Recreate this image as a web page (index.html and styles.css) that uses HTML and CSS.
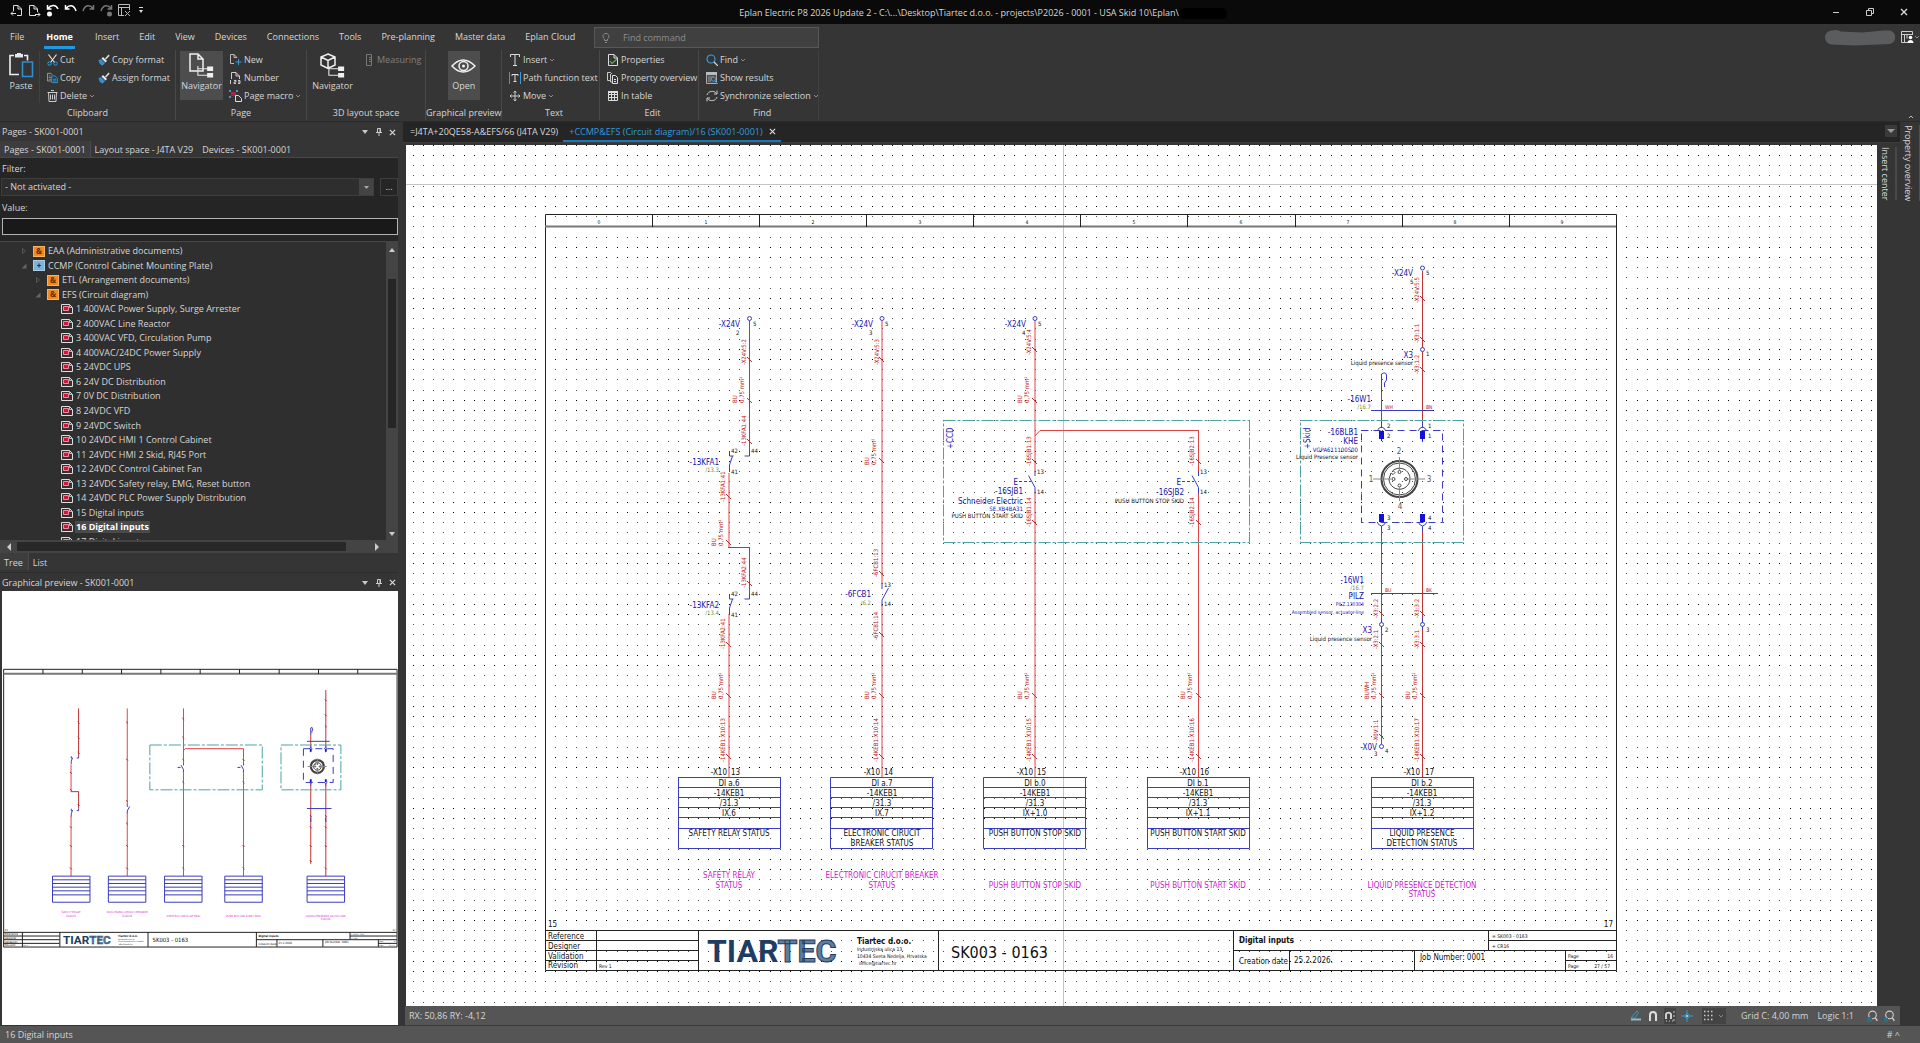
FILE: index.html
```html
<!DOCTYPE html>
<html lang="en">
<head>
<meta charset="utf-8">
<title>Eplan Electric P8 2026 Update 2</title>
<link rel="stylesheet" href="styles.css">
</head>
<body>
<svg class="defs" aria-hidden="true">
  <defs>
    <symbol id="i-chev" viewBox="0 0 6 6"><path d="M1 2l2 2 2-2" fill="none" stroke="#8a8a8a"/></symbol>
    <symbol id="i-tri" viewBox="0 0 8 8"><path d="M1 2h6L4 6z" fill="#c8c8c8"/></symbol>
    <symbol id="i-pin" viewBox="0 0 8 8"><path d="M2.5.5h3v4h-3zM1 4.5h6M4 4.5V8M5 1v3" fill="none" stroke="#ccc"/></symbol>
    <symbol id="i-x" viewBox="0 0 8 8"><path d="M1 1l6 6M7 1L1 7" fill="none" stroke="#ddd" stroke-width="1.3"/></symbol>
    <symbol id="i-page" viewBox="0 0 12 10"><path d="M.5.5h8l3 3v6H.5z" fill="#3a3032" stroke="#ddd"/><path d="M8.500.5v3h3" fill="none" stroke="#8fd0b8"/><path d="M2.500 2.500h5v4h-5z" fill="#d4143c" stroke="#f28aa0"/></symbol>
    <symbol id="i-amp" viewBox="0 0 12 11"><path d="M0 0h12v11H0z" fill="#f28a1e"/><path d="M.5.5h11v10H.5z" fill="none" stroke="#ffd9a8" stroke-dasharray="1 1"/><text x="6" y="8" text-anchor="middle" font-size="8" font-weight="700" fill="#5c3000">&amp;</text></symbol>
    <symbol id="i-plus" viewBox="0 0 12 11"><path d="M0 0h12v11H0z" fill="#7fb2d6"/><path d="M.5.5h11v10H.5z" fill="none" stroke="#d5ecfa" stroke-dasharray="1 1"/><path d="M6 3.500v4M4 5.500h4" stroke="#0d3f70" stroke-width="1.200"/></symbol>
    <symbol id="i-shut" viewBox="0 0 6 6"><path d="M1.500.5l3 2.500-3 2.500z" fill="none" stroke="#555"/></symbol>
    <symbol id="i-open" viewBox="0 0 6 6"><path d="M5.500.5v5h-5z" fill="#666"/></symbol>
    <symbol id="i-brush" viewBox="0 0 12 12"><path d="M7 4.500L10.500.5l1.200 1.200L8 5.500z" fill="#ddd"/><path d="M5 3l4 4-1.500 1.500-4-4z" fill="#e8e8e8"/><path d="M3 5l4 4-2.500 2.500C2.500 11 1 9 .5 6.500z" fill="#3a9bd8"/><path d="M1.500 7l3 3M3 6l3 3" stroke="#1c5f93" stroke-width=".6"/></symbol>
    <symbol id="i-mag" viewBox="0 0 10 11"><circle cx="5" cy="4.500" r="3.500" fill="none" stroke="#ccc"/><path d="M7.500 7l2 3" stroke="#ccc" stroke-width="1.300"/></symbol>
    <symbol id="i-navtree" viewBox="0 0 15 11"><path d="M.5 0v8.500h9M.5 2.500h9" fill="none" stroke="#e6e6e6"/><path d="M9 .5h5.500v4H9zM9 6.500h5.500v4H9z" fill="#f0f0f0"/></symbol>

    <g id="terminal-box">
      <path class="ln blue" d="M.5.5h102v71H.5zM.5 10.500h102M.5 20.500h102M.5 30.500h102M.5 40.500h102M.5 51.500h102"/>
    </g>

    <g id="sheet">
      <path class="ln ink" d="M545.500 214.500H1616.500V970.500H545.500z"/>
      <path class="ln gray" d="M545 226.500H1616"/>
      <path class="ln ink" d="M652.500 214v13M759.500 214v13M866.500 214v13M973.500 214v13M1080.500 214v13M1187.500 214v13M1295.500 214v13M1402.500 214v13M1509.500 214v13"/>
      <path class="ln ink" d="M545 930.500H1616M545 940.500H698M545 950.500H698M545 960.500H698M596.500 930v40M698.500 930v40M938.500 930v40M1233.500 930v40M1233 950.500H1616M1488.500 930v20M1488 940.500H1616M1289.500 950v20M1414.500 950v20M1565.500 950v20M1565 960.500H1616"/>

      <path class="ln wire-dark" d="M749.500 321V452M749.500 547V594M728 547.500H750M1422.500 271V425M1422.500 528V777M1381.500 390V425M1381.500 528V744"/>
      <path class="ln wire" d="M729 473V547M729 614V777M882 321V584M882 605V777M1035 321V472M1035 492V777M1035 436l5-5.500H1198.500V472M1198.500 492V777"/>
      <path class="ln tick" d="M747 357l5 5M747 398l5 5M747 439l5 5M726 494l5 5M726 540l5 5M747 581l5 5M726 642l5 5M726 693l5 5M726 754l5 5M879 357l5 5M879 458l5 5M879 571l5 5M879 632l5 5M879 693l5 5M879 754l5 5M1032 347l5 5M1032 398l5 5M1032 459l5 5M1032 520l5 5M1032 693l5 5M1032 754l5 5M1196 459l5 5M1196 520l5 5M1196 693l5 5M1196 754l5 5M1420 296l5 5M1420 337l5 5M1420 367l5 5M1379 611l5 5M1420 611l5 5M1379 642l5 5M1420 642l5 5M1379 693l5 5M1420 693l5 5M1379 734l5 5M1420 754l5 5"/>
      <g class="ln blue">
        <path d="M749.500 451v5h-5M729.500 451v5h4M732.500 456l-3 9v7M749.500 594v5h-5M729.500 594v5h4M732.500 599l-3 9v7M882 583v6M888.500 588L882 600v6M1035 471v5M1028.500 475.500l6.500 12v6M1198.500 471v5M1192 475.500l6.500 12v6"/>
        <path stroke-dasharray="3 2" d="M1019 481.500h12M1182 481.500h12"/>
        <path d="M1371 410.500h62M1371 593.500h67M1381.500 392V374q5-3 5 2v4l-2 3v4M1377 431q4.500-8 9 0M1418 431q4.500-8 9 0M1377 522q4.500 8 9 0M1418 522q4.500 8 9 0M1381.500 422v6M1422.500 422v6M1381.500 526v5M1422.500 526v5M1381.500 618v12M1422.500 618v12"/>
      </g>
      <path class="solid-blue" d="M1379 431h5v8h-5zM1381 439h1v2h-1zM1420 431h5v8h-5zM1422 439h1v2h-1zM1379 514h5v8h-5zM1420 514h5v8h-5z"/>
      <path class="ln teal" stroke-dasharray="12 2 3 2" d="M943.500 420.500h306v122h-306zM1300.500 420.500h163v122h-163z"/>
      <path class="ln blue" stroke-dasharray="7 5" d="M1361.500 430.500h81v92h-81z"/>
      <g class="ln connector">
        <circle class="ring" cx="1399.500" cy="479" r="18"/><circle cx="1399.500" cy="479" r="16"/>
        <path d="M1391 473l-2 6a10.500 10.500 0 1 0 4-8.500l2 2-2 2z"/>
        <circle cx="1393.500" cy="479" r="1.500"/><circle cx="1406" cy="479" r="1.500"/><circle cx="1399.500" cy="472" r="1.500"/><circle cx="1399.500" cy="485.500" r="1.500"/>
        <path class="thin" d="M1373 479h18M1408 479h17M1399.500 457v13M1399.500 487v14"/>
      </g>
      <use href="#terminal-box" x="678" y="777"/>
      <use href="#terminal-box" x="830" y="777"/>
      <use href="#terminal-box" x="983" y="777"/>
      <use href="#terminal-box" x="1147" y="777"/>
      <use href="#terminal-box" x="1371" y="777"/>

      <g class="t8 magenta mid">
        <text x="729" y="878">SAFETY RELAY</text><text x="729" y="888">STATUS</text>
        <text x="882" y="878">ELECTRONIC CIRUCIT BREAKER</text><text x="882" y="888">STATUS</text>
        <text x="1035" y="888">PUSH BUTTON STOP SKID</text>
        <text x="1198" y="888">PUSH BUTTON START SKID</text>
        <text x="1422" y="888">LIQUID PRESENCE DETECTION</text><text x="1422" y="897">STATUS</text>
      </g>
      <g class="t8">
        <text x="548" y="927">15</text><text x="1613" y="927" class="end">17</text>
        <text x="548" y="939">Reference</text><text x="548" y="949">Designer</text><text x="548" y="959">Validation</text><text x="548" y="968">Revision</text>
        <text x="857" y="944" class="bold">Tiartec d.o.o.</text>
        <text x="1239" y="943" class="bold">Digital inputs</text>
        <text x="1239" y="964">Creation date</text><text x="1294" y="963">25.2.2026.</text><text x="1420" y="960">Job Number: 0001</text>
      </g>
      <text class="t16" x="951" y="958">SK003 - 0163</text>
      <g class="t5">
        <text x="599" y="968">Rev 1</text>
        <text x="857" y="951">Industrijska ulica 13,</text><text x="857" y="958">10434 Sveta Nedelja, Hrvatska</text><text x="859" y="965">office@tiartec.hr</text>
        <text x="1492" y="938">=  SK003 - 0163</text><text x="1492" y="948">+  CR16</text>
        <text x="1568" y="958">Page</text><text x="1613" y="958" class="end">16</text><text x="1568" y="968">Page</text><text x="1610" y="968" class="end">27 / 57</text>
      </g>
      <text class="logo" x="707" y="962">TIAR<tspan class="logo-open">TEC</tspan></text>
    </g>

    <pattern id="dots" x="555" y="206" width="51" height="51" patternUnits="userSpaceOnUse">
      <path fill="#000" d="M0 0h1v1H0zM11 0h1v1h-1zM21 0h1v1h-1zM31 0h1v1h-1zM41 0h1v1h-1zM0 41h1v1H0zM11 41h1v1h-1zM21 41h1v1h-1zM31 41h1v1h-1zM41 41h1v1h-1z"/>
      <path fill="#4c4c4c" d="M0 10h1v1H0zM11 10h1v1h-1zM21 10h1v1h-1zM31 10h1v1h-1zM41 10h1v1h-1zM0 20h1v1H0zM11 20h1v1h-1zM21 20h1v1h-1zM31 20h1v1h-1zM41 20h1v1h-1zM0 31h1v1H0zM11 31h1v1h-1zM21 31h1v1h-1zM31 31h1v1h-1zM41 31h1v1h-1z"/>
    </pattern>
  </defs>
</svg>

<div class="app">
  <header class="titlebar">
    <div class="quick">
      <button aria-label="Previous page"><svg width="13" height="13"><path d="M3.500 7V1.500H8l3.500 3.500v6.500H7M8 1.500V5h3.500M1 9.500h5M3 7.500l-2 2 2 2" fill="none" stroke="#ddd"/></svg></button>
      <button aria-label="Next page"><svg width="13" height="13"><path d="M8 11.500H1.500v-10H6L9.500 5v3M6 1.500V5h3.500M7 10.500h5M10 8.500l2 2-2 2" fill="none" stroke="#ddd"/></svg></button>
      <button aria-label="Undo list"><svg width="13" height="13"><path d="M1.500 1v4h4M2 4.500C5 .5 10 .5 12 5" fill="none" stroke="#fff" stroke-width="1.500"/><circle cx="3.500" cy="10" r="2.500" fill="#fff"/></svg></button>
      <button aria-label="Undo"><svg width="13" height="13"><path d="M1.500 1v4h4M2 4.500C5 .5 10 .5 12 7" fill="none" stroke="#fff" stroke-width="1.500"/></svg></button>
      <button aria-label="Redo"><svg width="13" height="13"><path d="M11.500 1v4h-4M11 4.500C8 .5 3 .5 1 7" fill="none" stroke="#777" stroke-width="1.500"/></svg></button>
      <button aria-label="Redo list"><svg width="13" height="13"><path d="M11.500 1v4h-4M11 4.500C8 .5 3 .5 1 7" fill="none" stroke="#777" stroke-width="1.500"/><circle cx="9.500" cy="10" r="2.500" fill="#777"/></svg></button>
      <button aria-label="Close page"><svg width="13" height="13"><path d="M6 11.500H.5v-11h11V6M.5 3.500h11M3.500 3.500v8M7 7l5 5M12 7l-5 5" fill="none" stroke="#bbb"/></svg></button>
      <button aria-label="Customize" class="slim"><svg width="6" height="8"><path d="M1 1.500h4" stroke="#ddd"/><path d="M1 4h4L3 7z" fill="#ddd"/></svg></button>
    </div>
    <div class="title">Eplan Electric P8 2026 Update 2 - C:\...\Desktop\Tiartec d.o.o. - projects\P2026 - 0001 - USA Skid 10\Eplan\<span class="smudge"></span></div>
    <div class="wincontrols">
      <button aria-label="Minimize"><svg width="8" height="8"><path d="M1 4.500h6" stroke="#ccc"/></svg></button>
      <button aria-label="Restore"><svg width="8" height="8"><path d="M.5 2.500h5v5h-5zM2.500 2.500v-2h5v5h-2" fill="none" stroke="#ccc"/></svg></button>
      <button aria-label="Close"><svg width="8" height="8"><use href="#i-x"/></svg></button>
    </div>
  </header>

  <section class="ribbon">
    <div class="menu">
      <nav class="tabs">
        <button>File</button><button class="active">Home</button><button>Insert</button><button>Edit</button><button>View</button><button>Devices</button><button>Connections</button><button>Tools</button><button>Pre-planning</button><button>Master data</button><button>Eplan Cloud</button>
      </nav>
      <label class="search"><svg width="8" height="10"><path d="M2.500 7.500V6a3 3 0 1 1 3 0v1.500zM3 9.500h2" fill="none" stroke="#888"/></svg><input type="search" aria-label="Find command" placeholder="Find command"></label>
      <div class="account">
        <svg width="74" height="17"><path d="M8 1.500Q13 0 17 2.500L38 3.500 60 1.500h6a7 7 0 0 1 0 13.500L30 16.500 8 15.500a7 7 0 0 1 0-14z" fill="#5b5c5e"/></svg>
        <button aria-label="Workspace"><svg width="18" height="13"><path d="M11.500 4V.5H.5v11H8M.5 3.500h11M3.500 3.500v8M6 3.500v4" fill="none" stroke="#ccc"/><circle cx="9.500" cy="6.500" r="1.800" fill="#fff"/><path d="M6.500 12c0-4 6-4 6 0z" fill="#fff"/><path d="M14 5l2 2 2-2" fill="none" stroke="#888"/></svg></button>
      </div>
    </div>
    <div class="groups">
      <div class="group g-clip">
        <div class="body">
          <button class="big paste"><svg width="25" height="25"><path d="M5 2.500H1v19h9M15 2.500h3.500v5" fill="none" stroke="#f0f0f0" stroke-width="1.600"/><path d="M6 1h2V0h4v1h2v3.500H6z" fill="#e6e6ee"/><path d="M13.500 9h10v14.500h-10z" fill="none" stroke="#2f8fce" stroke-width="1.600"/></svg><span>Paste</span></button>
          <div class="cmds c-1">
            <button><svg width="11" height="12"><path d="M1.500.5l6 8M9.500.5l-6 8" stroke="#e0e0e0" stroke-width="1.200"/><circle cx="2.500" cy="9.500" r="1.700" fill="none" stroke="#3a9bd8"/><circle cx="8.500" cy="9.500" r="1.700" fill="none" stroke="#3a9bd8"/></svg>Cut</button>
            <button><svg width="11" height="12" viewBox="0 0 13 12"><path d="M5 9.500H.5v-9h4l2 2" fill="none" stroke="#aaa"/><path d="M2 3.500h2M2 5.500h3M2 7.500h3" stroke="#999"/><path d="M5.500 3.500h4l3 3v5h-7z" fill="#17455f" stroke="#3a9bd8"/><path d="M7 7.500h4M7 9.500h4" stroke="#3a9bd8"/></svg>Copy</button>
            <button><svg width="11" height="12"><path d="M1.500 2.500h8l-.5 9H2zM.5 2.500h10M4 .5h3M3.500 4.500v5M5.500 4.500v5M7.500 4.500v5" fill="none" stroke="#ccc"/></svg>Delete<svg width="6" height="6"><use href="#i-chev"/></svg></button>
          </div>
          <div class="cmds c-2">
            <button><svg width="12" height="12"><use href="#i-brush"/></svg>Copy format</button>
            <button><svg width="12" height="12"><use href="#i-brush"/></svg>Assign format</button>
          </div>
        </div>
        <div class="caption">Clipboard</div>
      </div>
      <div class="group g-page">
        <div class="body">
          <button class="big on"><svg width="25" height="25"><path d="M1 1h8l5 5v12H1zM9 1v5h5" fill="none" stroke="#f0f0f0" stroke-width="1.500"/><use href="#i-navtree" x="8" y="13" width="17" height="12"/></svg><span>Navigator</span></button>
          <div class="cmds">
            <button><svg width="13" height="12"><path d="M5 9.500H1.500v-9H5l3 3M5 .5v3h3" fill="none" stroke="#bbb"/><path d="M9.500 5v6M6.500 8h6" stroke="#3a9bd8"/></svg>New</button>
            <button><svg width="13" height="12"><path d="M2.500 7V.5H7l3.500 3.500v3M7 .5V4h3.500M1.500 8v4M5 8.500h2v1.500H5v1.500h2M9 8.500h2v3H9M9 10h2" fill="none" stroke="#ccc"/></svg>Number</button>
            <button><svg width="13" height="12"><path d="M0 0h2v2H0zM7 0h2v2H7zM0 6h2v2H0z" fill="#3a9bd8"/><path d="M2 2h5v4H2z" fill="#b02040"/><path d="M6.500 5.500h3l3 3v3h-6z" fill="#353535" stroke="#ddd"/></svg>Page macro<svg width="6" height="6"><use href="#i-chev"/></svg></button>
          </div>
        </div>
        <div class="caption">Page</div>
      </div>
      <div class="group g-3d">
        <div class="body">
          <button class="big"><svg width="25" height="25"><path d="M8 1l7 3v8l-7 3.500L1 12V4zM1 4l7 3.500L15 4M8 7.500v8" fill="none" stroke="#f0f0f0" stroke-width="1.500"/><use href="#i-navtree" x="8" y="13" width="17" height="12"/></svg><span>Navigator</span></button>
          <div class="cmds">
            <button disabled><svg width="6" height="12"><path d="M.5.5h5v11h-5zM3 3.500h2M3 5.500h2M3 7.500h2" fill="none" stroke="#777"/></svg>Measuring</button>
          </div>
        </div>
        <div class="caption">3D layout space</div>
      </div>
      <div class="group g-prev">
        <div class="body">
          <button class="big on"><svg width="25" height="25"><path d="M1 13Q12 1 24 13 12 25 1 13z" fill="none" stroke="#f0f0f0" stroke-width="1.500"/><circle cx="12.500" cy="13" r="4.500" fill="none" stroke="#f0f0f0" stroke-width="1.500"/><circle cx="12.500" cy="13" r="1.500" fill="#f0f0f0"/></svg><span>Open</span></button>
        </div>
        <div class="caption">Graphical preview</div>
      </div>
      <div class="group g-text">
        <div class="body">
          <div class="cmds">
            <button><svg width="12" height="12"><path d="M1.500 3V.5h9V3M6 .5v11M4 11.500h4" fill="none" stroke="#ddd"/></svg>Insert<svg width="6" height="6"><use href="#i-chev"/></svg></button>
            <button><svg width="12" height="12"><path d="M.5 0v12M11.500 0v12" stroke="#3a9bd8"/><path d="M3 4V2.500h6V4M6 2.500v7M4.500 9.500h3" fill="none" stroke="#ddd"/></svg>Path function text</button>
            <button><svg width="12" height="12"><path d="M6 1v10M1 6h10M4.500 2.500L6 1l1.500 1.500M4.500 9.500L6 11l1.500-1.500M2.500 4.500L1 6l1.500 1.500M9.500 4.500L11 6 9.500 7.500" fill="none" stroke="#ccc"/></svg>Move<svg width="6" height="6"><use href="#i-chev"/></svg></button>
          </div>
        </div>
        <div class="caption">Text</div>
      </div>
      <div class="group g-edit">
        <div class="body">
          <div class="cmds">
            <button><svg width="12" height="12"><path d="M1.500.5H7L10.500 4v7.500h-9zM7 .5V4h3.500" fill="none" stroke="#ddd"/><path d="M3 7l2 2.500L10 5" fill="none" stroke="#5cb85c" stroke-width="1.200"/></svg>Properties</button>
            <button><svg width="12" height="12"><path d="M3 8.500H.5v-8h3l1.500 1.500M6 10H3.500V2" fill="none" stroke="#ccc"/><path d="M5.500 3.500h3l2 2v6h-5zM7 7.500h2M7 9.500h2" fill="none" stroke="#ddd"/></svg>Property overview</button>
            <button><svg width="12" height="12"><path d="M1.500 1.500h9v9h-9zM1.500 4.500h9M1.500 7.500h9M4.500 1.500v9M7.500 1.500v9" fill="none" stroke="#ddd"/><path d="M1 1h10v2H1z" fill="#ddd"/></svg>In table</button>
          </div>
        </div>
        <div class="caption">Edit</div>
      </div>
      <div class="group g-find">
        <div class="body">
          <div class="cmds">
            <button><svg width="12" height="12"><circle cx="5" cy="5" r="4" fill="none" stroke="#3a9bd8" stroke-width="1.200"/><path d="M8 8l4 4" stroke="#ddd" stroke-width="1.200"/></svg>Find<svg width="6" height="6"><use href="#i-chev"/></svg></button>
            <button><svg width="12" height="12"><path d="M.5.5h10v11H.5z" fill="#4a4a4a" stroke="#aaa"/><path d="M0 0h11v3H0z" fill="#bbb"/><path d="M2 5h6M2 7h4M2 9h3" stroke="#999"/><circle cx="7.500" cy="7" r="2.200" fill="none" stroke="#3a9bd8"/><path d="M9 9l3 3" stroke="#3a9bd8"/></svg>Show results</button>
            <button><svg width="12" height="12"><path d="M1 5C2 1 8 0 10.500 3.500M11 .5v3.500H8M11 7c-1 4-7 5-9.500 1.500M1 11.500V8h3" fill="none" stroke="#ccc"/></svg>Synchronize selection<svg width="6" height="6"><use href="#i-chev"/></svg></button>
          </div>
        </div>
        <div class="caption">Find</div>
      </div>
      <button class="collapse" aria-label="Collapse ribbon"><svg width="6" height="6"><path d="M1 4l2-2 2 2" fill="none" stroke="#bbb"/></svg></button>
    </div>
  </section>

  <main class="work">
    <aside class="side">
      <section class="navigator">
        <div class="head"><h2>Pages - SK001-0001</h2><span class="tools"><button aria-label="Menu"><svg width="8" height="8"><use href="#i-tri"/></svg></button><button aria-label="Pin"><svg width="8" height="8"><use href="#i-pin"/></svg></button><button aria-label="Close"><svg width="7" height="7"><use href="#i-x" width="7" height="7"/></svg></button></span></div>
        <div class="navtabs"><button class="active">Pages - SK001-0001</button><button>Layout space - J4TA V29</button><button>Devices - SK001-0001</button></div>
        <div class="fields">
          <label for="filter">Filter:</label>
          <div class="filter-row">
            <div class="select"><select id="filter"><option>- Not activated -</option></select><svg width="14" height="16"><path d="M5 7h5l-2.500 3z" fill="#aaa"/></svg></div>
            <button class="more">...</button>
          </div>
          <label for="value">Value:</label>
          <input id="value" type="text">
        </div>
        <div class="treebox">
          <ul class="tree">
            <li class="l1"><svg width="6" height="6"><use href="#i-shut"/></svg><svg width="12" height="11"><use href="#i-amp"/></svg>EAA (Administrative documents)</li>
            <li class="l1"><svg width="6" height="6"><use href="#i-open"/></svg><svg width="12" height="11"><use href="#i-plus"/></svg>CCMP (Control Cabinet Mounting Plate)</li>
            <li class="l2"><svg width="6" height="6"><use href="#i-shut"/></svg><svg width="12" height="11"><use href="#i-amp"/></svg>ETL (Arrangement documents)</li>
            <li class="l2"><svg width="6" height="6"><use href="#i-open"/></svg><svg width="12" height="11"><use href="#i-amp"/></svg>EFS (Circuit diagram)</li>
            <li class="l3"><svg width="12" height="10"><use href="#i-page"/></svg>1 400VAC Power Supply, Surge Arrester</li>
            <li class="l3"><svg width="12" height="10"><use href="#i-page"/></svg>2 400VAC Line Reactor</li>
            <li class="l3"><svg width="12" height="10"><use href="#i-page"/></svg>3 400VAC VFD, Circulation Pump</li>
            <li class="l3"><svg width="12" height="10"><use href="#i-page"/></svg>4 400VAC/24DC Power Supply</li>
            <li class="l3"><svg width="12" height="10"><use href="#i-page"/></svg>5 24VDC UPS</li>
            <li class="l3"><svg width="12" height="10"><use href="#i-page"/></svg>6 24V DC Distribution</li>
            <li class="l3"><svg width="12" height="10"><use href="#i-page"/></svg>7 0V DC Distribution</li>
            <li class="l3"><svg width="12" height="10"><use href="#i-page"/></svg>8 24VDC VFD</li>
            <li class="l3"><svg width="12" height="10"><use href="#i-page"/></svg>9 24VDC Switch</li>
            <li class="l3"><svg width="12" height="10"><use href="#i-page"/></svg>10 24VDC HMI 1 Control Cabinet</li>
            <li class="l3"><svg width="12" height="10"><use href="#i-page"/></svg>11 24VDC HMI 2 Skid, RJ45 Port</li>
            <li class="l3"><svg width="12" height="10"><use href="#i-page"/></svg>12 24VDC Control Cabinet Fan</li>
            <li class="l3"><svg width="12" height="10"><use href="#i-page"/></svg>13 24VDC Safety relay, EMG, Reset button</li>
            <li class="l3"><svg width="12" height="10"><use href="#i-page"/></svg>14 24VDC PLC Power Supply Distribution</li>
            <li class="l3"><svg width="12" height="10"><use href="#i-page"/></svg>15 Digital inputs</li>
            <li class="l3"><svg width="12" height="10"><use href="#i-page"/></svg><b>16 Digital inputs</b></li>
            <li class="l3"><svg width="12" height="10"><use href="#i-page"/></svg>17 Digital inputs</li>
          </ul>
          <div class="vscroll"><svg width="8" height="6"><path d="M1 5h6L4 1z" fill="#ccc"/></svg><span></span><svg width="8" height="6"><path d="M1 1h6L4 5z" fill="#ccc"/></svg></div>
          <div class="hscroll"><svg width="6" height="8"><path d="M5 0v8L1 4z" fill="#ccc"/></svg><span></span><svg width="6" height="8"><path d="M1 0v8l4-4z" fill="#ccc"/></svg></div>
        </div>
        <div class="viewtabs"><button class="active">Tree</button><button>List</button></div>
      </section>
      <section class="preview">
        <div class="head"><h2>Graphical preview - SK001-0001</h2><span class="tools"><button aria-label="Menu"><svg width="8" height="8"><use href="#i-tri"/></svg></button><button aria-label="Pin"><svg width="8" height="8"><use href="#i-pin"/></svg></button><button aria-label="Close"><svg width="7" height="7"><use href="#i-x" width="7" height="7"/></svg></button></span></div>
        <div class="thumb"><svg viewBox="541 4 1078 1176" role="img" aria-label="Page preview"><use href="#sheet"/></svg></div>
      </section>
    </aside>

    <section class="editor">
      <div class="doctabs">
        <button>=J4TA+20QE58-A&amp;EFS/66 (J4TA V29)</button>
        <button class="active">+CCMP&amp;EFS (Circuit diagram)/16 (SK001-0001)<svg width="7" height="7"><use href="#i-x" width="7" height="7"/></svg></button>
        <button class="list" aria-label="Open pages"><svg width="8" height="8"><path d="M0 2h8L4 6z" fill="#999"/></svg></button>
      </div>
      <div class="stage">
        <div class="canvas">
          <svg width="100%" height="100%" role="img" aria-label="Circuit diagram">
            <g transform="translate(-406 -145)">
              <rect x="406" y="145" width="4000" height="3000" fill="url(#dots)"/>
              <path class="cross" d="M406 184.500H4400M1063.500 145V3000"/>
              <use href="#sheet"/>
              <g class="rings">
                <circle cx="749.500" cy="318.500" r="2"/><circle cx="882" cy="318.500" r="2"/><circle cx="1035" cy="318.500" r="2"/><circle cx="1422.500" cy="268" r="2"/><circle cx="1422.500" cy="349.500" r="2"/><circle cx="1381.500" cy="624.500" r="2"/><circle cx="1422.500" cy="624.500" r="2"/><circle cx="1381.500" cy="746.500" r="2"/>
              </g>
              <g class="t5 mid">
                <text x="599" y="224">0</text><text x="706" y="224">1</text><text x="813" y="224">2</text><text x="920" y="224">3</text><text x="1027" y="224">4</text><text x="1134" y="224">5</text><text x="1241" y="224">6</text><text x="1348" y="224">7</text><text x="1455" y="224">8</text><text x="1562" y="224">9</text>
              </g>
              <g class="t8 blue-t end">
                <text x="740" y="327">-X24V</text><text x="873" y="327">-X24V</text><text x="1026" y="327">-X24V</text><text x="1413" y="276">-X24V</text>
                <text x="719" y="465">-13KFA1</text><text x="719" y="608">-13KFA2</text><text x="871" y="597">-6FCB1</text>
                <text x="1018" y="485">E</text><text x="1181" y="485">E</text>
                <text x="1023" y="494">-16SJB1</text><text x="1023" y="504">Schneider Electric</text><text x="1184" y="495">-16SJB2</text>
                <text x="1413" y="358">X3</text><text x="1371" y="402">-16W1</text><text x="1358" y="435">-16BLB1</text><text x="1358" y="444">KHE</text>
                <text x="1364" y="583">-16W1</text><text x="1364" y="599">PILZ</text><text x="1372" y="633">X3</text><text x="1377" y="750">-X0V</text>
              </g>
              <g class="t8 blue-t"><text transform="translate(953 449) rotate(-90)">+CCD</text><text transform="translate(1310 449) rotate(-90)">+Skid</text></g>
              <g class="t6 blue-t end"><text x="1023" y="511">SE.XB4BA31</text><text x="1358" y="452">VGPA611100S00</text></g>
              <g class="t5 blue-t end"><text x="1364" y="606">PILZ.130304</text><text x="1364" y="614">Assembled sensor, actuator-line</text></g>
              <g class="t6 end"><text x="1023" y="518">PUSH BUTTON START SKID</text><text x="1184" y="503">PUSH BUTTON STOP SKID</text><text x="1413" y="365">Liquid presence sensor</text><text x="1358" y="459">Liquid Presence sensor</text><text x="1372" y="641">Liquid presence sensor</text></g>
              <g class="t6 green-t end"><text x="719" y="472">/13.3</text><text x="719" y="615">/13.4</text><text x="871" y="605">/6.2</text><text x="1371" y="409">/16.7</text><text x="1364" y="590">/16.7</text></g>
              <g class="t6 small">
                <text x="753" y="326">5</text><text x="736" y="335">2</text><text x="751" y="453">44</text><text x="731" y="453">42</text><text x="731" y="474">41</text><text x="751" y="596">44</text><text x="731" y="596">42</text><text x="731" y="617">41</text>
                <text x="885" y="326">5</text><text x="869" y="335">3</text><text x="884" y="587">13</text><text x="884" y="606">14</text>
                <text x="1038" y="326">5</text><text x="1022" y="335">4</text><text x="1037" y="474">13</text><text x="1037" y="494">14</text><text x="1200" y="474">13</text><text x="1200" y="494">14</text>
                <text x="1426" y="275">5</text><text x="1410" y="284">5</text><text x="1426" y="356">1</text>
                <text x="1387" y="428">2</text><text x="1387" y="438">2</text><text x="1428" y="428">1</text><text x="1428" y="438">1</text><text x="1387" y="520">3</text><text x="1387" y="530">3</text><text x="1428" y="520">4</text><text x="1428" y="530">4</text>
                <text x="1385" y="632">2</text><text x="1426" y="632">3</text><text x="1385" y="753">4</text><text x="1374" y="756">3</text>
              </g>
              <g class="t8 gray-t mid"><text x="1399" y="454">2</text><text x="1371" y="482">1</text><text x="1429" y="482">3</text><text x="1400" y="509">4</text></g>
              <g class="t5 red-t"><text x="1385" y="409">WH</text><text x="1426" y="409">BN</text><text x="1385" y="592">BU</text><text x="1426" y="592">BK</text></g>
              <g class="t6 red-t">
                <text transform="translate(746 365) rotate(-90)">-X24V:5:2</text><text transform="translate(737 403) rotate(-90)">BU</text><text transform="translate(744 403) rotate(-90)">0,75 mm²</text><text transform="translate(746 446) rotate(-90)">-13KFA1:44</text>
                <text transform="translate(725 502) rotate(-90)">-13KFA1:41</text><text transform="translate(716 546) rotate(-90)">BU</text><text transform="translate(723 546) rotate(-90)">0,75 mm²</text><text transform="translate(746 588) rotate(-90)">-13KFA2:44</text>
                <text transform="translate(725 649) rotate(-90)">-13KFA2:41</text><text transform="translate(716 699) rotate(-90)">BU</text><text transform="translate(723 699) rotate(-90)">0,75 mm²</text><text transform="translate(725 762) rotate(-90)">-14KEB1:X10:13</text>
                <text transform="translate(879 365) rotate(-90)">-X24V:5:3</text><text transform="translate(869 465) rotate(-90)">BU</text><text transform="translate(876 465) rotate(-90)">0,75 mm²</text><text transform="translate(878 577) rotate(-90)">-6FCB1:13</text><text transform="translate(878 640) rotate(-90)">-6FCB1:14</text><text transform="translate(869 699) rotate(-90)">BU</text><text transform="translate(876 699) rotate(-90)">0,75 mm²</text><text transform="translate(878 762) rotate(-90)">-14KEB1:X10:14</text>
                <text transform="translate(1031 355) rotate(-90)">-X24V:5:4</text><text transform="translate(1022 403) rotate(-90)">BU</text><text transform="translate(1029 403) rotate(-90)">0,75 mm²</text><text transform="translate(1031 466) rotate(-90)">-16SJB1:13</text><text transform="translate(1031 527) rotate(-90)">-16SJB1:14</text><text transform="translate(1022 699) rotate(-90)">BU</text><text transform="translate(1029 699) rotate(-90)">0,75 mm²</text><text transform="translate(1031 762) rotate(-90)">-14KEB1:X10:15</text>
                <text transform="translate(1194 466) rotate(-90)">-16SJB2:13</text><text transform="translate(1194 527) rotate(-90)">-16SJB2:14</text><text transform="translate(1185 699) rotate(-90)">BU</text><text transform="translate(1192 699) rotate(-90)">0,75 mm²</text><text transform="translate(1194 762) rotate(-90)">-14KEB1:X10:16</text>
                <text transform="translate(1419 303) rotate(-90)">-X24V:5:5</text><text transform="translate(1419 343) rotate(-90)">-X3:1:1</text><text transform="translate(1419 374) rotate(-90)">-X3:1:2</text>
                <text transform="translate(1378 618) rotate(-90)">-X3:2:2</text><text transform="translate(1419 618) rotate(-90)">-X3:3:2</text><text transform="translate(1378 649) rotate(-90)">-X3:2:1</text><text transform="translate(1419 649) rotate(-90)">-X3:3:1</text>
                <text transform="translate(1369 699) rotate(-90)">BUWH</text><text transform="translate(1376 699) rotate(-90)">0,75 mm²</text><text transform="translate(1410 699) rotate(-90)">BU</text><text transform="translate(1417 699) rotate(-90)">0,75 mm²</text>
                <text transform="translate(1378 742) rotate(-90)">-X0V:1:1</text><text transform="translate(1419 762) rotate(-90)">-14KEB1:X10:17</text>
              </g>
              <g class="t8 end"><text x="727" y="775">-X10</text><text x="880" y="775">-X10</text><text x="1033" y="775">-X10</text><text x="1196" y="775">-X10</text><text x="1420" y="775">-X10</text></g>
              <g class="t8"><text x="731" y="775">13</text><text x="884" y="775">14</text><text x="1037" y="775">15</text><text x="1200" y="775">16</text><text x="1425" y="775">17</text></g>
              <g class="t8 mid">
                <text x="729" y="786">DI a.6</text><text x="729" y="796">-14KEB1</text><text x="729" y="806">/31.3</text><text x="729" y="816">IX.6</text><text x="729" y="836">SAFETY RELAY STATUS</text>
                <text x="882" y="786">DI a.7</text><text x="882" y="796">-14KEB1</text><text x="882" y="806">/31.3</text><text x="882" y="816">IX.7</text><text x="882" y="836">ELECTRONIC CIRUCIT</text><text x="882" y="846">BREAKER STATUS</text>
                <text x="1035" y="786">DI b.0</text><text x="1035" y="796">-14KEB1</text><text x="1035" y="806">/31.3</text><text x="1035" y="816">IX+1.0</text><text x="1035" y="836">PUSH BUTTON STOP SKID</text>
                <text x="1198" y="786">DI b.1</text><text x="1198" y="796">-14KEB1</text><text x="1198" y="806">/31.3</text><text x="1198" y="816">IX+1.1</text><text x="1198" y="836">PUSH BUTTON START SKID</text>
                <text x="1422" y="786">DI b.2</text><text x="1422" y="796">-14KEB1</text><text x="1422" y="806">/31.3</text><text x="1422" y="816">IX+1.2</text><text x="1422" y="836">LIQUID PRESENCE</text><text x="1422" y="846">DETECTION STATUS</text>
              </g>
            </g>
          </svg>
        </div>
        <div class="rail inner"><button>Insert center</button></div>
      </div>
      <div class="docstatus">
        <span class="coords">RX: 50,86 RY: -4,12</span>
        <button aria-label="Layer"><svg width="12" height="12"><path d="M1 8l6-7 1.500 1.500L5 8z" fill="none" stroke="#2f9bc8"/><path d="M1 8.500h10v2H1z" fill="#9ab8c8"/></svg></button>
        <button aria-label="Snap"><svg width="12" height="12"><path d="M3 11V5a3 3 0 0 1 6 0v6" fill="none" stroke="#ddd" stroke-width="2"/></svg></button>
        <button aria-label="Snap to grid" class="dark"><svg width="12" height="12"><path d="M2 9V4a3 3 0 0 1 5 0v5" fill="none" stroke="#ddd" stroke-width="1.800"/><path d="M10 1v2M10 5v2M10 9v2M2 11h1M5 11h1M8 11h1" stroke="#ccc"/></svg></button>
        <button aria-label="Center"><svg width="12" height="12"><path d="M6 0v12M0 6h12M6 3l3 3-3 3-3-3z" fill="none" stroke="#2f9bc8"/><circle cx="6" cy="6" r="1" fill="#ddd"/></svg></button>
        <button aria-label="Grid" class="dark grid"><svg width="24" height="12"><path d="M2 1.500h9M2 5.500h9M2 9.500h9" stroke="#ccc" stroke-width="1.500" stroke-dasharray="1.500 2"/><path d="M17 5l2 2 2-2" fill="none" stroke="#888"/></svg></button>
        <span class="gridsize">Grid C: 4,00 mm</span><span>Logic 1:1</span>
        <span class="zooms"><button aria-label="Zoom in"><svg width="11" height="12"><use href="#i-mag"/><path d="M0 7h5v5H0z" fill="#2a6d8c"/></svg></button><button aria-label="Zoom out"><svg width="11" height="12"><use href="#i-mag"/><path d="M0 8h4v4H0z" fill="#2a6d8c"/></svg></button></span>
      </div>
    </section>
    <div class="rail outer"><button>Property overview</button></div>
  </main>

  <footer class="status"><span>16 Digital inputs</span><span># ^</span></footer>
</div>
</body>
</html>
```
FILE: styles.css
```css
* { box-sizing: border-box; }
html, body { height: 100%; margin: 0; }
body { font: 9px/12px "Open Sans", "Noto Sans", sans-serif; color: #d6d6d6; background: #353535; overflow: hidden; }
button, input, select { font: inherit; color: inherit; background: none; border: 0; padding: 0; margin: 0; }
button { display: flex; align-items: center; cursor: default; white-space: nowrap; }
h2 { margin: 0; font: inherit; }
svg { display: block; flex: none; }
.defs { position: absolute; width: 0; height: 0; }

.app { height: 100vh; display: grid; grid-template-rows: 24px 98px minmax(0, 1fr) 17px; }

/* title bar */
.titlebar { display: grid; grid-template-columns: 1fr auto 1fr; align-items: center; background: #0a0a0a; }
.quick { display: flex; gap: 5px; padding-left: 10px; padding-bottom: 4px; }
.quick .slim { margin-left: 2px; }
.title { display: flex; align-items: center; padding: 2px 0 0 46px; white-space: nowrap; }
.smudge { width: 48px; height: 11px; border-radius: 6px; background: #000; }
.wincontrols { display: flex; justify-content: flex-end; gap: 26px; padding-right: 12px; }

/* ribbon */
.ribbon { display: grid; grid-template-rows: 26px 72px; background: #353535; border-bottom: 1px solid #2a2a2a; }
.menu { display: flex; align-items: center; }
.tabs { display: flex; gap: 20px; padding-left: 10px; width: 594px; height: 26px; flex: none; }
.tabs button { border-bottom: 3px solid transparent; padding-top: 4px; height: 25px; }
.tabs .active { font-weight: 700; color: #fff; border-color: #1e9be0; padding-left: 2px; padding-right: 2px; }
.search { display: flex; align-items: center; gap: 13px; width: 225px; height: 21px; padding: 1px 0 0 7px; background: #404040; border: 1px solid #585858; }
.search input { flex: 1; min-width: 0; outline: 0; }
.search input::placeholder { color: #8c8c8c; }
.account { display: flex; align-items: center; gap: 3px; margin-left: auto; padding-right: 1px; }
.groups { display: flex; }
.group { display: grid; grid-template-rows: 56px 1fr; border-right: 1px solid #484848; height: 70px; padding-top: 1px; }
.group:nth-child(7) { border-color: #404040; }
.caption { text-align: center; white-space: nowrap; }
.body { display: flex; }
.g-clip { width: 176px; }
.g-page { width: 131px; padding-left: 4px; }
.g-3d { width: 119px; padding-left: 4px; }
.g-prev { width: 76px; }
.g-prev .body { justify-content: center; }
.g-prev .caption { display: flex; justify-content: center; }
.g-text { width: 98px; padding-left: 7px; }
.g-edit { width: 99px; padding-left: 7px; }
.g-find { width: 120px; padding-left: 7px; }
.g-page .caption, .g-3d .caption { margin-left: -4px; }
.big { flex-direction: column; gap: 2px; height: 49px; width: 43px; padding-top: 2px; }
.g-prev .big { width: 32px; }
.big.on { background: #4d4d4d; }
.paste { width: 40px; height: 52px; border-right: 1px solid #424242; padding-left: 3px; }
.cmds { display: grid; grid-template-rows: repeat(3, 1fr); height: 54px; margin-left: 6px; }
.g-text .cmds, .g-edit .cmds, .g-find .cmds { margin-left: 0; }
.cmds button { gap: 2px; }
.cmds.c-1 { width: 51px; margin-left: 7px; }
.cmds.c-2 { margin-left: 0; }
.g-3d .cmds { margin-left: 12px; }
.g-3d .cmds button { gap: 5px; }
.cmds button:disabled { color: #808080; }
.collapse { margin: auto 6px 2px auto; }

/* work area */
.work { display: grid; grid-template-columns: 403px minmax(0, 1fr) 20px; min-height: 0; }
.side { display: grid; grid-template-rows: auto minmax(0, 1fr); padding-right: 5px; min-height: 0; background: #353535; }
.head { display: flex; align-items: center; justify-content: space-between; height: 19px; padding: 1px 2px 0; }
.tools { display: flex; align-items: center; gap: 6px; }
.navtabs { display: flex; height: 17px; border-bottom: 1px solid #484848; }
.navtabs button { padding: 1px 4px 0; border-right: 1px solid transparent; }
.navtabs .active { background: #3d3d3d; border-color: #4c4c4c; }
.fields { display: grid; background: #252525; grid-template-rows: 20px 18px 22px 17px; padding-bottom: 6px; }
.fields > label { align-self: center; padding: 1px 0 0 2px; }
.filter-row { display: grid; grid-template-columns: 1fr 18px; gap: 6px; padding-left: 1px; }
.select { display: grid; grid-template-columns: 1fr 14px; align-items: center; background: #2e2e2e; border: 1px solid #3e3e3e; }
.select select { grid-area: 1 / 1 / 2 / 3; appearance: none; padding-left: 3px; height: 16px; }
.select svg { grid-area: 1 / 2; background: #444; pointer-events: none; }
.more { justify-content: center; border: 1px solid #3e3e3e; }
#value { margin-left: 2px; border: 1px solid #b4b4b4; background: #191919; outline: 0; }
.treebox { display: grid; grid-template-columns: minmax(0, 1fr) 12px; grid-template-rows: 299px 13px; background: #444; }
.tree { list-style: none; margin: 0; padding: 2px 0 0 1px; background: #2f2f2f; border-top: 1px solid #484848; display: grid; grid-template-rows: repeat(21, 1fr); height: 308px; min-height: 0; clip-path: inset(0 0 9px 0); }
.tree li { display: flex; align-items: center; gap: 3px; white-space: nowrap; }
.tree svg + svg { margin-left: 3px; }
.l1 { padding-left: 20px; }
.l2 { padding-left: 34px; }
.l3 { padding-left: 60px; }
.tree b { background: #4a4a4a; color: #fff; padding: 0 1px; margin-left: -1px; }
.vscroll { display: grid; grid-template-rows: 32px 149px 1fr; justify-items: center; padding: 6px 0 3px; }
.vscroll span { width: 8px; background: #262626; }
.vscroll svg:last-child { align-self: end; }
.hscroll { grid-column: 1 / 3; display: flex; align-items: center; padding: 0 18px 0 6px; background: #444; position: relative; }
.hscroll span { width: 330px; height: 9px; margin: 0 28px 0 5px; background: #282828; }
.viewtabs { display: flex; height: 20px; padding-bottom: 2px; border-bottom: 1px solid #2c2c2c; }
.viewtabs button { padding: 2px 5px 0 4px; border-right: 1px solid transparent; }
.viewtabs .active { background: #3d3d3d; border-color: #4c4c4c; }
.preview { display: grid; grid-template-rows: 18px minmax(0, 1fr); min-height: 0; }
.preview .head { height: 18px; }
.thumb { background: #fff; margin: 0 0 1px 2px; min-height: 0; overflow: hidden; }
.thumb svg { width: 100%; height: 100%; }

/* editor */
.editor { display: grid; grid-template-rows: 23px minmax(0, 1fr) 20px; min-height: 0; background: #353535; }
.doctabs { display: flex; height: 21px; background: #252525; border-bottom: 1px solid #3c3c3c; padding-left: 1px; }
.doctabs button { padding: 1px 5px 0 6px; border-bottom: 2px solid transparent; }
.doctabs .active { color: #2f9bdb; border-color: #1a78b8; gap: 6px; }
.doctabs .list { margin: 3px 3px 5px auto; padding: 0 2px; background: #3a3a3a; border: 0; }
.stage { display: grid; grid-template-columns: minmax(0, 1fr) 23px; min-height: 0; padding-left: 3px; }
.canvas { background: #fff; min-height: 0; overflow: hidden; }
.rail button { writing-mode: vertical-rl; }
.rail.inner { padding: 2px 0 0 2px; }
.rail.inner button { border-right: 2px solid #484848; padding-right: 4px; }
.rail.outer { padding-top: 3px; background: #353535; }
.rail.outer button { padding: 0 5px 0 2px; border-right: 2px solid #505050; }
.docstatus { display: flex; align-items: center; gap: 5px; background: #555; margin-left: 2px; padding: 0 5px 0 4px; border-bottom: 1px solid #3c3c3c; }
.coords { margin-right: auto; }
.dark { background: #444; padding: 2px 0; }
.grid { margin-left: 4px; }
.gridsize { margin: 0 4px 0 10px; }
.zooms { display: flex; gap: 6px; margin-left: 8px; }
.status { display: flex; justify-content: space-between; align-items: center; background: #555; padding: 0 20px 0 5px; }

/* drawing */
.ln { fill: none; stroke-width: 1; }
.ln, .ln * { vector-effect: non-scaling-stroke; }
.ink { stroke: #222; }
.gray { stroke: #777; stroke-width: 2; }
.blue { stroke: #3c3cc0; }
.solid-blue { fill: #1010e0; }
.teal { stroke: #4fa3a3; }
.wire { stroke: #e04545; }
.wire-dark { stroke: #bf3434; }
.tick { stroke: #b03030; }
.connector { stroke: #444; }
.connector .ring { stroke-width: 2; }
.connector .thin { stroke: #888; }
.cross { stroke: #c4c4c4; fill: none; }
.rings { fill: #fff; stroke: #3c3cc0; }
.t5, .t6, .t8, .t16 { font-family: "DejaVu Sans Condensed", "DejaVu Sans", sans-serif; fill: #111; white-space: pre; }
.t5 { font-size: 5px; }
.t6 { font-size: 6px; }
.t8 { font-size: 8px; }
.t16 { font-size: 16px; }
.bold { font-weight: 700; }
.mid { text-anchor: middle; }
.end { text-anchor: end; }
.blue-t { fill: #1616b0; }
.red-t { fill: #b81010; }
.green-t { fill: #74903c; }
.gray-t { fill: #555; }
.magenta { fill: #d020d0; }
.logo { font: 700 32px Roboto, sans-serif; fill: #1f3d63; }
.logo-open { fill: #5f7d9f; stroke: #1f3d63; stroke-width: 1; }
```
